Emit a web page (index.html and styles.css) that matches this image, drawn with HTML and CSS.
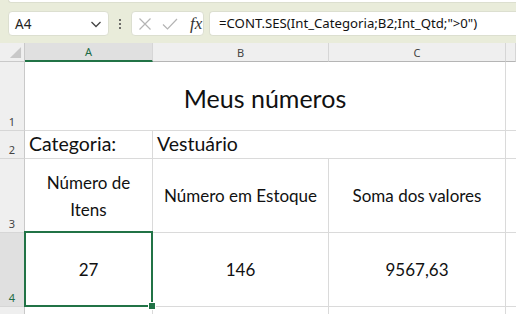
FILE: index.html
```html
<!DOCTYPE html>
<html lang="pt">
<head>
<meta charset="utf-8">
<link rel="stylesheet" href="styles.css">
</head>
<body>
<div class="ribbon-edge"></div>
<div class="fbar">
  <div class="namebox">
    <span class="nb-text">A4</span>
    <svg class="chev" width="12" height="8" viewBox="0 0 12 8"><path d="M1.5 2 L6 6.5 L10.5 2" fill="none" stroke="#444" stroke-width="1.3"/></svg>
  </div>
  <div class="dots"><span></span><span></span><span></span></div>
  <div class="fxbox">
    <svg width="14" height="14" viewBox="0 0 14 14"><path d="M1.5 1.5 L12.5 12.5 M12.5 1.5 L1.5 12.5" stroke="#b4b4b4" stroke-width="1.2" fill="none"/></svg>
    <svg width="16" height="14" viewBox="0 0 16 14"><path d="M1 7.5 L5.5 12 L15 2" stroke="#b4b4b4" stroke-width="1.2" fill="none"/></svg>
    <span class="fx">fx</span>
  </div>
  <div class="formula">=CONT.SES(Int_Categoria;B2;Int_Qtd;"&gt;0")</div>
</div>
<div class="sheet">
  <div class="corner"><svg width="14" height="14" viewBox="0 0 14 14"><path d="M13 1 L13 13 L1 13 Z" fill="#c8c8c8"/></svg></div>
  <div class="colh sel">A</div>
  <div class="colh">B</div>
  <div class="colh">C</div>
  <div class="colh last"></div>

  <div class="rowh r1">1</div>
  <div class="cell title">Meus números</div>
  <div class="cell last"></div>

  <div class="rowh r2">2</div>
  <div class="cell big left">Categoria:</div>
  <div class="cell big left span2">Vestuário</div>
  <div class="cell last"></div>

  <div class="rowh r3">3</div>
  <div class="cell center">Número de<br>Itens</div>
  <div class="cell center">Número em Estoque</div>
  <div class="cell center">Soma dos valores</div>
  <div class="cell last"></div>

  <div class="rowh r4 sel">4</div>
  <div class="cell center active">27</div>
  <div class="cell center">146</div>
  <div class="cell center">9567,63</div>
  <div class="cell last"></div>

  <div class="rowh r5"></div>
  <div class="cell"></div>
  <div class="cell"></div>
  <div class="cell"></div>
  <div class="cell last"></div>
</div>
</body>
</html>
```
FILE: styles.css
```css
* { box-sizing: border-box; }
html, body { margin: 0; padding: 0; }
body {
  width: 516px;
  height: 314px;
  overflow: hidden;
  background: #e9ecda;
  font-family: Lato, "Noto Sans", sans-serif;
}
.ribbon-edge {
  height: 3px;
  margin-left: 8px;
  background: #ffffff;
  border-bottom: 1px solid #dcdfcf;
  border-left: 1px solid #dcdfcf;
  border-bottom-left-radius: 4px;
}
.fbar {
  height: 40px;
  display: flex;
  align-items: flex-start;
  padding-top: 8px;
  padding-left: 8px;
}
.namebox {
  width: 101px;
  height: 25px;
  background: #fff;
  border: 1px solid #dcdfd0;
  border-radius: 4px;
  display: flex;
  align-items: center;
  justify-content: space-between;
  padding: 0 6px 0 6px;
}
.nb-text {
  font-family: "Noto Sans", "Open Sans", sans-serif;
  font-size: 13.5px;
  color: #222;
}
.chev { margin-top: 1px; }
.dots {
  width: 22px;
  height: 25px;
  display: flex;
  flex-direction: column;
  align-items: center;
  justify-content: center;
  gap: 2px;
}
.dots span {
  width: 2px;
  height: 2px;
  background: #444;
  border-radius: 1px;
}
.fxbox {
  width: 73px;
  height: 25px;
  background: #fff;
  border: 1px solid #dcdfd0;
  border-radius: 4px;
  display: flex;
  align-items: center;
  gap: 10px;
  padding-left: 6px;
}
.fx {
  font-family: "Liberation Serif", serif;
  font-style: italic;
  font-size: 17px;
  color: #333;
  margin-left: 2px;
}
.formula {
  margin-left: 5px;
  flex: 1;
  height: 25px;
  background: #fff;
  border: 1px solid #dcdfd0;
  border-right: none;
  border-radius: 4px 0 0 4px;
  font-family: "Noto Sans", "Open Sans", sans-serif;
  font-size: 13.2px;
  color: #111;
  line-height: 23px;
  padding-left: 9px;
  white-space: nowrap;
}
.sheet {
  display: grid;
  grid-template-columns: 25px 128px 176px 177px 10px;
  grid-template-rows: 19px 69px 28px 74px 74px 10px;
  background: #fff;
  font-size: 17px;
  color: #111;
}
.corner {
  background: #efefef;
  border-right: 1px solid #c9c9c9;
  border-bottom: 1px solid #c9c9c9;
  display: flex;
  align-items: flex-end;
  justify-content: flex-end;
  padding: 0 2px 2px 0;
}
.corner svg { width: 13px; height: 13px; }
.colh {
  background: #efefef;
  border-right: 1px solid #d6d6d6;
  border-bottom: 1px solid #b5b5b5;
  font-family: "Noto Sans", "Open Sans", sans-serif;
  font-size: 11px;
  color: #444;
  display: flex;
  align-items: center;
  justify-content: center;
}
.colh.sel {
  background: #e0e0e0;
  color: #1d6b45;
  border-bottom: 2px solid #217346;
}
.rowh {
  background: #efefef;
  border-right: 1px solid #c9c9c9;
  border-bottom: 1px solid #d6d6d6;
  font-family: "Noto Sans", "Open Sans", sans-serif;
  font-size: 11px;
  color: #444;
  display: flex;
  align-items: flex-end;
  justify-content: center;
  padding-bottom: 1px;
}
.rowh.sel { background: #e0e0e0; color: #1d6b45; }
.cell {
  border-right: 1px solid #dadada;
  border-bottom: 1px solid #dadada;
  display: flex;
  align-items: center;
  white-space: nowrap;
}
.cell.last { border-right: none; }
.span2 { grid-column: span 2; }
.title {
  grid-column: 2 / 5;
  justify-content: center;
  font-size: 25px;
  padding-top: 4px;
}
.big { font-size: 19.5px; align-items: flex-end; padding-bottom: 3px; }
.left { padding-left: 4px; }
.center { justify-content: center; text-align: center; line-height: 27px; }
.active { position: relative; }
.active::after {
  content: "";
  position: absolute;
  left: -1px;
  top: -2px;
  right: -1px;
  bottom: -1px;
  border: 2px solid #217346;
}
.active::before {
  content: "";
  position: absolute;
  right: -4px;
  bottom: -4px;
  width: 6px;
  height: 6px;
  background: #217346;
  border: 1px solid #fff;
  z-index: 2;
}
```
